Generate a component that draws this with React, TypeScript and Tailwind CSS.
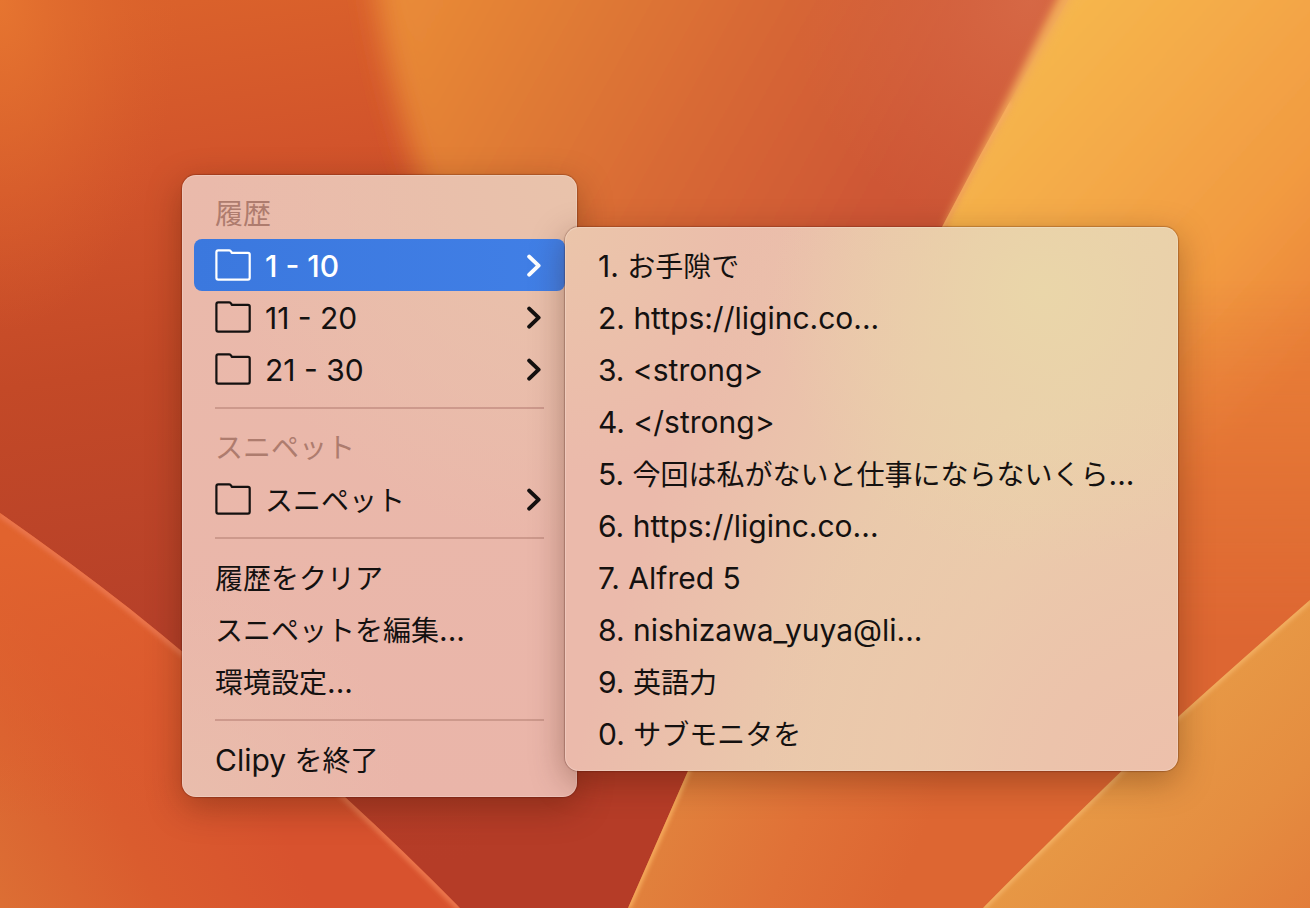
import React, { useState } from 'react';
import { clsx } from 'clsx';

const historyFolders = ['1 - 10', '11 - 20', '21 - 30'];

const clips = [
  { key: 1, text: 'お手隙で' },
  { key: 2, text: 'https://liginc.co...' },
  { key: 3, text: '<strong>' },
  { key: 4, text: '</strong>' },
  { key: 5, text: '今回は私がないと仕事にならないくら...' },
  { key: 6, text: 'https://liginc.co...' },
  { key: 7, text: 'Alfred 5' },
  { key: 8, text: 'nishizawa_yuya@li...' },
  { key: 9, text: '英語力' },
  { key: 0, text: 'サブモニタを' },
];

// Kana and kanji are set slightly smaller than the latin text next to them
const Label = ({ text }: { text: string }) => (
  <span className="whitespace-pre">
    {text.split(/([\u3040-\u30ff\u4e00-\u9fff]+)/).map((part, i) =>
      i % 2 === 1 ? (
        <span key={i} className="text-[28px]">{part}</span>
      ) : (
        part
      )
    )}
  </span>
);

const FolderIcon = () => (
  <svg viewBox="0 0 36 32" className="h-8 w-9 shrink-0" fill="none" stroke="currentColor" strokeWidth="2.2" strokeLinejoin="round">
    <path d="M1.4 3.2Q1.4 1.4 3.2 1.4H14.2Q15.6 1.4 16.1 2.6L16.7 3.8H33Q34.7 3.8 34.7 5.5V28.8Q34.7 30.6 33 30.6H3.2Q1.4 30.6 1.4 28.8Z" />
  </svg>
);

const ChevronIcon = () => (
  <svg viewBox="0 0 18 24" className="ml-auto h-6 w-[18px] shrink-0" fill="none" stroke="currentColor" strokeWidth="4" strokeLinecap="round" strokeLinejoin="round">
    <path d="M3.2 3.6L12.6 12.6L3.2 21.6" />
  </svg>
);

const Separator = () => (
  <div role="separator" className="mx-[21px] my-3 h-0.5 bg-[#cd998c]" />
);

const Heading = ({ text }: { text: string }) => (
  <div className="h-[52px] px-[21px] text-[#ae7c6e]">
    <Label text={text} />
  </div>
);

type MenuItemProps = {
  text: string;
  folder?: boolean;
  active?: boolean;
  onClick?: () => void;
};

const MenuItem = ({ text, folder, active, onClick }: MenuItemProps) => (
  <button
    type="button"
    role="menuitem"
    onClick={onClick}
    className={clsx(
      'flex h-[52px] w-full items-center rounded-lg px-[21px] text-left',
      active ? 'bg-linear-to-r from-[#3b78de] to-[#417fe6] font-medium text-white' : 'text-[#141110]'
    )}
  >
    {folder && <FolderIcon />}
    <span className={clsx('pt-0.5', folder && 'ml-3.5')}>
      <Label text={text} />
    </span>
    {folder && <ChevronIcon />}
  </button>
);

const Wallpaper = () => (
  <svg className="absolute inset-0 h-full w-full" viewBox="0 0 1310 908" preserveAspectRatio="xMidYMid slice" aria-hidden="true">
    <defs>
      <linearGradient id="base" gradientUnits="userSpaceOnUse" x1="200" y1="0" x2="330" y2="880">
        <stop offset="0" stopColor="#da612b" />
        <stop offset="0.18" stopColor="#d2542b" />
        <stop offset="0.4" stopColor="#c34927" />
        <stop offset="0.7" stopColor="#b64029" />
        <stop offset="1" stopColor="#b53c27" />
      </linearGradient>
      <radialGradient id="corner" gradientUnits="userSpaceOnUse" cx="0" cy="0" r="1" gradientTransform="scale(180 330)">
        <stop offset="0" stopColor="#e67530" />
        <stop offset="0.5" stopColor="#e16d2e" stopOpacity="0.5" />
        <stop offset="1" stopColor="#dc642c" stopOpacity="0" />
      </radialGradient>
      <linearGradient id="band" gradientUnits="userSpaceOnUse" x1="400" y1="0" x2="890" y2="270">
        <stop offset="0" stopColor="#e98b37" />
        <stop offset="0.28" stopColor="#e07b35" />
        <stop offset="0.6" stopColor="#d76735" />
        <stop offset="0.9" stopColor="#ce5735" />
        <stop offset="1" stopColor="#cc5435" />
      </linearGradient>
      <radialGradient id="bandTop" gradientUnits="userSpaceOnUse" cx="1030" cy="0" r="240">
        <stop offset="0" stopColor="#d66845" />
        <stop offset="0.5" stopColor="#d66642" stopOpacity="0.5" />
        <stop offset="1" stopColor="#d66540" stopOpacity="0" />
      </radialGradient>
      <linearGradient id="bandFade" gradientUnits="userSpaceOnUse" x1="0" y1="230" x2="0" y2="640">
        <stop offset="0" stopColor="#b53c27" stopOpacity="0" />
        <stop offset="1" stopColor="#b53c27" />
      </linearGradient>
      <linearGradient id="yellow" gradientUnits="userSpaceOnUse" x1="980" y1="60" x2="1310" y2="360">
        <stop offset="0" stopColor="#f6b94e" />
        <stop offset="0.35" stopColor="#f4aa48" />
        <stop offset="0.7" stopColor="#f29a41" />
        <stop offset="1" stopColor="#ea8238" />
      </linearGradient>
      <linearGradient id="yellowLow" gradientUnits="userSpaceOnUse" x1="660" y1="790" x2="900" y2="890">
        <stop offset="0" stopColor="#e1833d" />
        <stop offset="0.55" stopColor="#e07137" />
        <stop offset="1" stopColor="#dd6632" />
      </linearGradient>
      <linearGradient id="lowFade" gradientUnits="userSpaceOnUse" x1="0" y1="280" x2="0" y2="640">
        <stop offset="0" stopColor="white" stopOpacity="0" />
        <stop offset="1" stopColor="white" />
      </linearGradient>
      <mask id="lowMask">
        <rect width="1310" height="908" fill="url(#lowFade)" />
      </mask>
      <linearGradient id="right" gradientUnits="userSpaceOnUse" x1="1140" y1="750" x2="1310" y2="930">
        <stop offset="0" stopColor="#e79845" />
        <stop offset="0.5" stopColor="#e58d40" />
        <stop offset="1" stopColor="#e27b3a" />
      </linearGradient>
      <linearGradient id="left" gradientUnits="userSpaceOnUse" x1="0" y1="900" x2="260" y2="780">
        <stop offset="0" stopColor="#dc6e34" />
        <stop offset="0.5" stopColor="#da5c2e" />
        <stop offset="1" stopColor="#d8522e" />
      </linearGradient>
      <linearGradient id="leftTop" gradientUnits="userSpaceOnUse" x1="0" y1="540" x2="0" y2="820">
        <stop offset="0" stopColor="#e1632e" />
        <stop offset="1" stopColor="#dd5c2e" stopOpacity="0" />
      </linearGradient>
      <clipPath id="leftClip">
        <path d="M0 513Q70 562 130 609Q240 697 345 797Q405 852 460 908H0Z" />
      </clipPath>
      <clipPath id="rightClip">
        <path d="M1310 600Q1240 661 1178 717Q1080 810 983 908H1310Z" />
      </clipPath>
      <clipPath id="yellowClip">
        <path d="M1080 -20Q1006 104 942 227Q800 510 688 771L628 908H1310V-20Z" />
      </clipPath>
      <filter id="soft14" x="-20%" y="-20%" width="140%" height="140%"><feGaussianBlur stdDeviation="14" /></filter>
      <filter id="soft4"><feGaussianBlur stdDeviation="4" /></filter>
      <filter id="soft2"><feGaussianBlur stdDeviation="2" /></filter>
    </defs>

    <rect width="1310" height="908" fill="url(#base)" />
    <rect width="400" height="400" fill="url(#corner)" />
    <path d="M370 -60Q386 110 452 260Q520 420 640 560H1200V-60Z" fill="url(#band)" filter="url(#soft14)" />
    <rect x="780" width="330" height="240" fill="url(#bandTop)" />
    <rect x="480" y="230" width="600" height="678" fill="url(#bandFade)" />

    {/* upper edge of the yellow petal is out of focus, it sharpens further down */}
    <path d="M1072 -30Q1004 104 944 227H1380V-30Z" fill="#f2ab58" filter="url(#soft4)" />
    <g clipPath="url(#yellowClip)">
      <path d="M1086 -30Q1012 108 944 227Q800 510 690 771L628 940H1380V-30Z" fill="url(#yellow)" filter="url(#soft4)" />
      <rect width="1310" height="908" fill="url(#yellowLow)" mask="url(#lowMask)" />
      <path d="M1010 102Q975 160 942 227Q800 510 688 771L628 908" fill="none" stroke="#f9b061" strokeWidth="5" filter="url(#soft2)" />
    </g>

    <g clipPath="url(#leftClip)">
      <rect y="500" width="480" height="408" fill="url(#left)" />
      <rect y="500" width="480" height="408" fill="url(#leftTop)" />
      <path d="M0 513Q70 562 130 609Q240 697 345 797Q405 852 460 908" fill="none" stroke="#ea754b" strokeWidth="8" filter="url(#soft2)" />
    </g>

    <g clipPath="url(#rightClip)">
      <rect x="960" y="590" width="350" height="318" fill="url(#right)" />
      <path d="M1310 600Q1240 661 1178 717Q1080 810 983 908" fill="none" stroke="#f4b266" strokeWidth="5" filter="url(#soft2)" />
    </g>
  </svg>
);

export default function App() {
  const [open, setOpen] = useState('1 - 10');

  return (
    <div className="relative min-h-screen overflow-hidden bg-[#c34927] font-['Inter','Noto_Sans_CJK_JP',sans-serif] text-[30px] leading-[52px]">
      <Wallpaper />

      <main className="relative flex items-start pt-[175px] pl-[182px]">
        <nav
          role="menu"
          aria-label="Clipy"
          className="w-[395px] shrink-0 rounded-[14px] bg-[radial-gradient(circle_at_100%_0%,#e9c3ab_0%,#e9c0ab_15%,#eab8aa00_50%),radial-gradient(circle_at_0%_100%,#e9bdac_0%,#eab6a900_30%),linear-gradient(180deg,#eabaab,#eab5a9)] p-3 shadow-[inset_0_0_0_1px_rgba(255,255,255,0.2),0_0_1px_1px_rgba(60,10,0,0.25),0_10px_34px_rgba(60,20,0,0.35)]"
        >
          <Heading text="履歴" />
          {historyFolders.map((name) => (
            <MenuItem key={name} text={name} folder active={open === name} onClick={() => setOpen(name)} />
          ))}
          <Separator />
          <Heading text="スニペット" />
          <MenuItem text="スニペット" folder />
          <Separator />
          <MenuItem text="履歴をクリア" />
          <MenuItem text="スニペットを編集..." />
          <MenuItem text="環境設定..." />
          <Separator />
          <MenuItem text="Clipy を終了" />
        </nav>

        {/* Submenu overlaps the edge of its parent */}
        <div
          role="menu"
          aria-label={open}
          className="mt-[52px] -ml-3 w-[613px] shrink-0 rounded-[14px] bg-[radial-gradient(ellipse_at_78%_12%,#ead6a9_0%,#ead4a999_15%,#eacdab00_40%),radial-gradient(ellipse_at_100%_100%,#edc0ab_0%,#ecc3ab_15%,#eacaab00_50%),radial-gradient(circle_at_0%_0%,#ebc5aa_0%,#ebc0aa00_30%),linear-gradient(107deg,#ebbaab_22%,#eacaab_52%,#ead0ab_70%,#eacaab)] p-3 shadow-[inset_0_0_0_1px_rgba(255,255,255,0.2),0_0_1px_1px_rgba(60,10,0,0.25),0_10px_34px_rgba(60,20,0,0.35)]"
        >
          {clips.map((clip) => (
            <MenuItem key={clip.key} text={`${clip.key}. ${clip.text}`} />
          ))}
        </div>
      </main>
    </div>
  );
}
